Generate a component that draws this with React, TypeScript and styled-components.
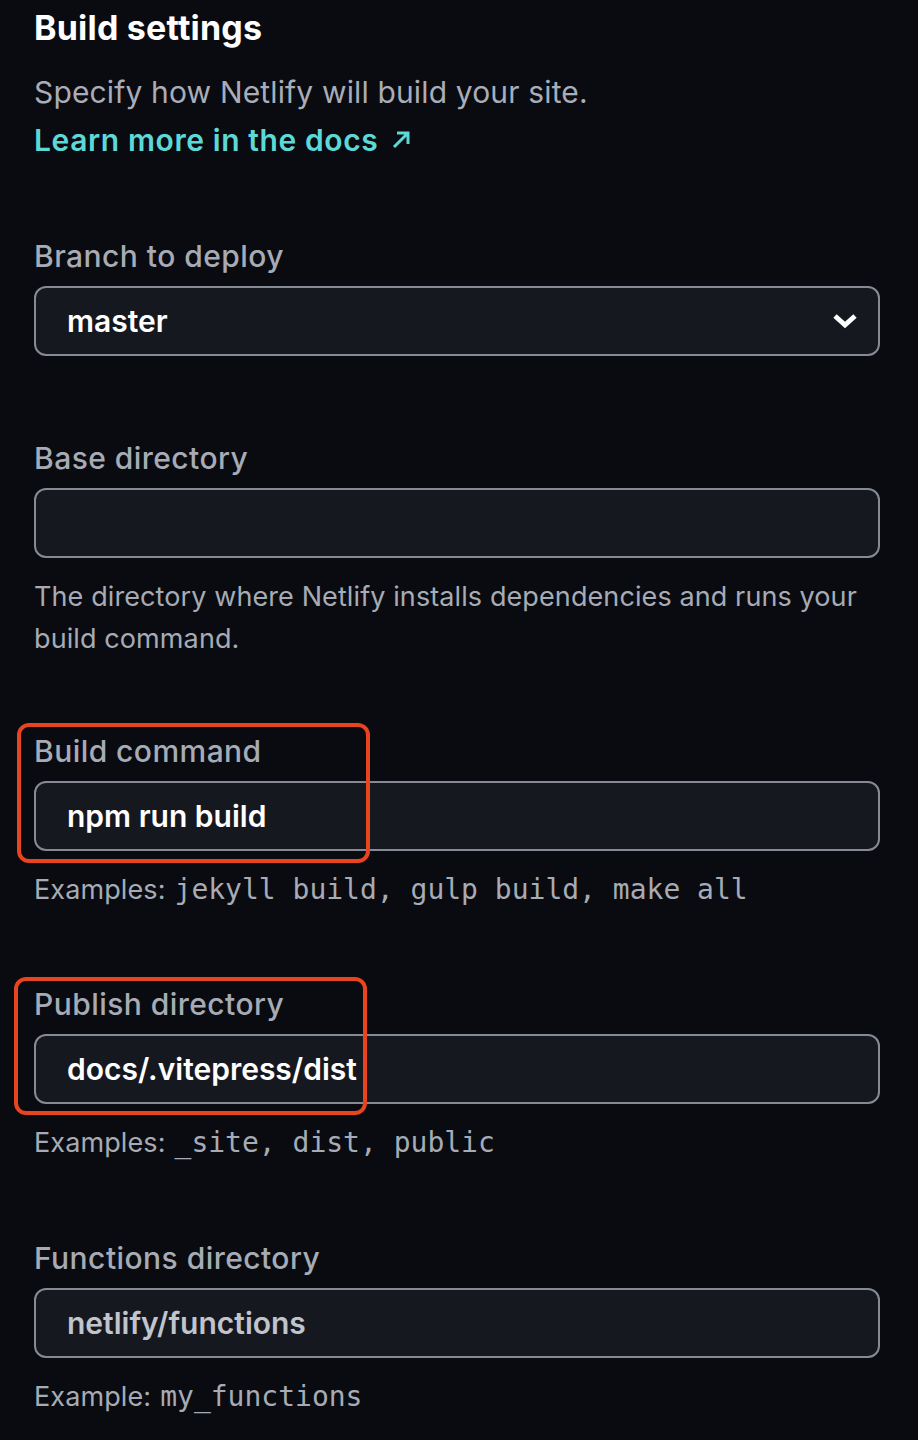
import React from "react";
import styled, { createGlobalStyle } from "styled-components";

const Global = createGlobalStyle`
  html, body { margin: 0; padding: 0; background: #090b10; }
  body { font-family: Inter, "Noto Sans", sans-serif; -webkit-font-smoothing: antialiased; }
  * { box-sizing: border-box; }
`;

const Page = styled.div`
  min-height: 1440px;
  background: #090b10;
  padding: 8px 38px 0 34px;
  display: flex;
  flex-direction: column;
`;

const Title = styled.h1`
  margin: 0;
  font-size: 34px;
  line-height: 40px;
  font-weight: 700;
  color: #ffffff;
  letter-spacing: 0.2px;
`;

const Intro = styled.p`
  margin: 20px 0 0;
  font-size: 30px;
  line-height: 48px;
  color: #a9adb8;
  font-weight: 400;
  letter-spacing: 0.15px;
`;

const DocsLink = styled.a`
  display: inline-flex;
  align-items: center;
  gap: 13px;
  font-size: 30px;
  line-height: 48px;
  font-weight: 600;
  letter-spacing: 0.6px;
  color: #5cd9d7;
  text-decoration: none;
`;

const Field = styled.div<{ $after: number }>`
  position: relative;
  display: flex;
  flex-direction: column;
  margin-top: ${(p) => p.$after}px;
`;

const Label = styled.label`
  font-size: 30px;
  line-height: 40px;
  font-weight: 500;
  letter-spacing: 0.45px;
  color: #a6abb5;
`;

const InputBox = styled.div`
  margin-top: 10px;
  height: 70px;
  border: 2px solid #858a94;
  border-radius: 12px;
  background: #161820;
  display: flex;
  align-items: center;
  justify-content: space-between;
  padding: 0 20px 0 31px;
`;

const Value = styled.span<{ $muted?: boolean }>`
  font-size: 30px;
  font-weight: 600;
  color: ${(p) => (p.$muted ? "#c0c4cc" : "#ffffff")};
`;

const Help = styled.div`
  margin-top: 18px;
  font-size: 27px;
  line-height: 42px;
  letter-spacing: 0.1px;
  color: #a6abb5;
`;

const Code = styled.code`
  font-family: "DejaVu Sans Mono", "Liberation Mono", monospace;
  font-size: 28px;
  letter-spacing: 0;
  color: #a6abb5;
  margin-left: 9px;
`;

const Highlight = styled.div<{ $top: number; $left: number; $h: number }>`
  position: absolute;
  top: ${(p) => p.$top}px;
  left: ${(p) => p.$left - 34}px;
  width: 353px;
  height: ${(p) => p.$h}px;
  border: 4px solid #e8441f;
  border-radius: 12px;
  pointer-events: none;
`;

const Chevron = () => (
  <svg width="26" height="18" viewBox="0 0 26 18">
    <polyline points="3,4 13,13 23,4" fill="none" stroke="#fff" strokeWidth="5" strokeLinejoin="miter" />
  </svg>
);

const Arrow = () => (
  <svg width="20" height="20" viewBox="0 0 20 20">
    <path d="M3 17 L17 3 M6 3 H17 V14" fill="none" stroke="#5cd9d7" strokeWidth="3" />
  </svg>
);

export default function App() {
  return (
    <>
      <Global />
      <Page>
        <Title>Build settings</Title>
        <Intro>Specify how Netlify will build your site.</Intro>
        <div>
          <DocsLink href="#">
            Learn more in the docs <Arrow />
          </DocsLink>
        </div>

        <Field $after={72}>
          <Label>Branch to deploy</Label>
          <InputBox>
            <Value>master</Value>
            <Chevron />
          </InputBox>
        </Field>

        <Field $after={82}>
          <Label>Base directory</Label>
          <InputBox />
          <Help>
            The directory where Netlify installs dependencies and runs your
            <br />
            build command.
          </Help>
        </Field>

        <Field $after={71}>
          <Label>Build command</Label>
          <InputBox>
            <Value>npm run build</Value>
          </InputBox>
          <Help>
            Examples:<Code>jekyll build, gulp build, make all</Code>
          </Help>
          <Highlight $top={-8} $left={17} $h={140} />
        </Field>

        <Field $after={73}>
          <Label>Publish directory</Label>
          <InputBox>
            <Value>docs/.vitepress/dist</Value>
          </InputBox>
          <Help>
            Examples:<Code>_site, dist, public</Code>
          </Help>
          <Highlight $top={-7} $left={14} $h={138} />
        </Field>

        <Field $after={74}>
          <Label>Functions directory</Label>
          <InputBox>
            <Value $muted>netlify/functions</Value>
          </InputBox>
          <Help>
            Example:<Code>my_functions</Code>
          </Help>
        </Field>
      </Page>
    </>
  );
}
